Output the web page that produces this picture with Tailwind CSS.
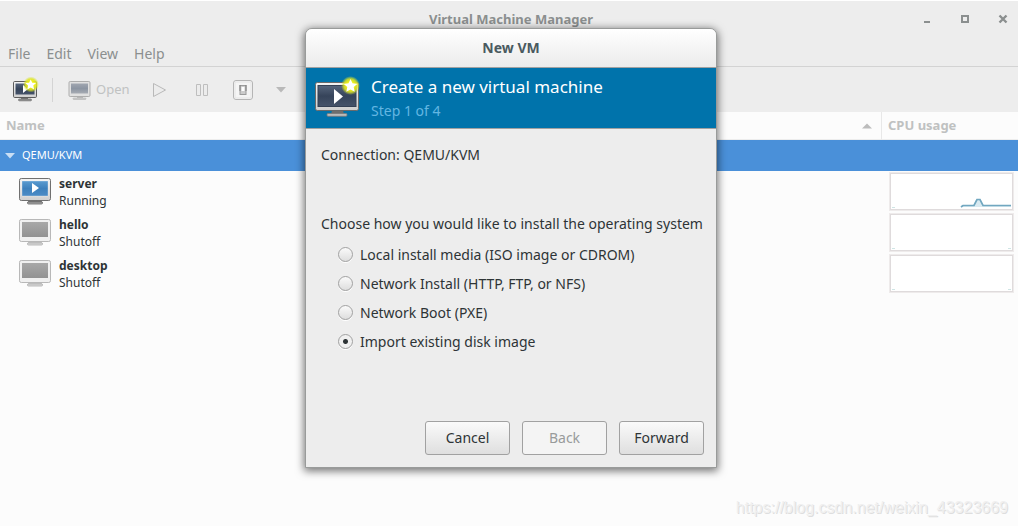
<!DOCTYPE html>
<html lang="en">
<head>
<meta charset="utf-8">
<meta name="viewport" content="width=device-width, initial-scale=1">
<title>Virtual Machine Manager</title>
<script src="https://cdn.jsdelivr.net/npm/@tailwindcss/browser@4"></script>
</head>
<body class="relative min-h-screen overflow-hidden bg-[#fcfcfc] font-['Noto_Sans','Open_Sans',sans-serif] text-sm text-[#2e3436]">

<svg class="absolute size-0" aria-hidden="true">
  <defs>
    <linearGradient id="frame" x1="0" y1="0" x2="0" y2="1"><stop offset="0" stop-color="#f4f4f4"/><stop offset="1" stop-color="#cfcfcf"/></linearGradient>
    <linearGradient id="navy" x1="0" y1="0" x2="0" y2="1"><stop offset="0" stop-color="#56657c"/><stop offset=".5" stop-color="#36445a"/><stop offset="1" stop-color="#45536a"/></linearGradient>
    <linearGradient id="blue" x1="0" y1="0" x2="0" y2="1"><stop offset="0" stop-color="#5a9bd0"/><stop offset=".5" stop-color="#3d80bc"/><stop offset="1" stop-color="#4c8cc6"/></linearGradient>
    <linearGradient id="gray" x1="0" y1="0" x2="0" y2="1"><stop offset="0" stop-color="#a8a8a8"/><stop offset="1" stop-color="#929292"/></linearGradient>
    <linearGradient id="pale" x1="0" y1="0" x2="0" y2="1"><stop offset="0" stop-color="#a0a6b0"/><stop offset=".5" stop-color="#8c95a2"/><stop offset="1" stop-color="#a6abb3"/></linearGradient>
    <radialGradient id="glow"><stop offset=".4" stop-color="#f2f218"/><stop offset=".7" stop-color="#dfe620" stop-opacity=".85"/><stop offset="1" stop-color="#d2e030" stop-opacity="0"/></radialGradient>
  </defs>
</svg>

<div class="flex min-h-screen flex-col">
  <header class="border-t border-white bg-[#ededed]">
    <div class="relative flex h-9 items-center justify-center">
      <h1 class="pl-1 text-[13px] font-bold text-[#8b8f8f]">Virtual Machine Manager</h1>
      <div class="absolute right-1.5 top-2 flex gap-5 text-[#8b8f8f]">
        <button aria-label="Minimize" class="size-[18px]"><svg viewBox="0 0 18 18" class="size-[18px]"><path d="M6 12h6v2H6z" fill="currentColor"/></svg></button>
        <button aria-label="Maximize" class="size-[18px]"><svg viewBox="0 0 18 18" class="size-[18px]"><path d="M6 7h6v6H6z" fill="none" stroke="currentColor" stroke-width="2"/></svg></button>
        <button aria-label="Close" class="size-[18px]"><svg viewBox="0 0 18 18" class="size-[18px]"><path d="M5.500 6.500l7 7m0-7l-7 7" fill="none" stroke="currentColor" stroke-width="2.400"/></svg></button>
      </div>
    </div>
    <nav class="flex h-[30px] items-end gap-4 border-b border-[#d3d3d3] px-2 pb-0.5 text-sm text-[#8b8f8f]">
      <button>File</button><button>Edit</button><button>View</button><button>Help</button>
    </nav>
    <div class="flex h-[45px] items-center text-[#c0c2c2]">
      <button aria-label="New virtual machine" class="ml-3">
        <svg viewBox="0 0 27 26" class="h-[26px] w-[27px]">
          <path d="M9 20h7v3H9z" fill="#777"/><rect x="6.500" y="22" width="13" height="1.800" rx=".9" fill="#999" stroke="#666" stroke-width=".7"/>
          <rect x="1.500" y="4.500" width="23" height="16" rx="1.200" fill="url(#frame)" stroke="#5c5c5c"/>
          <rect x="3.500" y="6.500" width="19" height="11" fill="url(#navy)"/>
          <path d="M11 8v8l5-4z" fill="#fff"/>
          <circle cx="19" cy="7.500" r="8" fill="url(#glow)"/>
          <path d="M18.700 2.500l1.600 3.200 3.800.4-2.800 2.500.8 3.800-3.400-1.900-3.400 1.900.8-3.800-2.800-2.500 3.800-.4z" fill="#fff"/>
        </svg>
      </button>
      <div class="ml-[13px] h-6 w-px bg-[#d4d4d4]"></div>
      <button class="ml-3.5 flex items-center gap-[3px]" disabled>
        <svg viewBox="0 0 26 24" class="h-6 w-[26px]"><path d="M10 17h6v4h-6z" fill="#bbb"/><rect x="6" y="20" width="13" height="1.500" rx=".7" fill="#ccc" stroke="#b0b0b0" stroke-width=".6"/><rect x="2" y="3.500" width="21" height="15" rx="1.200" fill="#e0e0e0" stroke="#adadad"/><rect x="4" y="5.500" width="17" height="10" fill="url(#pale)"/></svg>
        <span class="text-[13px]">Open</span>
      </button>
      <button aria-label="Run" class="ml-5" disabled><svg viewBox="0 0 18 18" class="size-[18px]"><path d="M3.500 2.500v13L15.500 9z" fill="#ececec" stroke="#b9b9b9" stroke-linejoin="round"/></svg></button>
      <button aria-label="Pause" class="ml-6" disabled><svg viewBox="0 0 18 18" class="size-[18px]"><path d="M4.500 3.500h4v11h-4zM11.500 3.500h4v11h-4z" fill="#ececec" stroke="#bebebe"/></svg></button>
      <button aria-label="Shut down" class="ml-[22px]" disabled><svg viewBox="0 0 22 22" class="size-[22px]"><rect x="1.500" y="1.500" width="19" height="19" rx="2.500" fill="#f5f5f5" stroke="#b5b5b5"/><rect x="3" y="3" width="16" height="16" rx="1" fill="none" stroke="#e5e5e5"/><rect x="8" y="6.500" width="6" height="9" fill="#ccc" stroke="#9c9c9c"/><path d="M9.500 8h3v4h-3z" fill="#fff"/><path d="M8 6v6M14 6v6" stroke="#808080"/></svg></button>
      <button aria-label="Shut down menu" class="ml-[22px]" disabled><svg viewBox="0 0 10 6" class="h-1.5 w-2.5"><path d="M0 0h10L5 5.500z" fill="#b9b9b9"/></svg></button>
    </div>
  </header>

  <table class="w-full table-fixed border-separate border-spacing-0 text-left text-xs">
    <colgroup><col><col class="w-[137px]"></colgroup>
    <thead>
      <tr class="h-7 text-[13px] text-[#bfc1c1]">
        <th class="border-b border-[#ededed] px-1.5 pb-0 pt-px font-bold" aria-sort="ascending"><span class="flex items-center justify-between">Name<svg viewBox="0 0 10 6" class="mr-[3px] h-1.5 w-2.5"><path d="M0 5.500h10L5 .5z" fill="#bcbcbc"/></svg></span></th>
        <th class="border-b border-l border-b-[#ededed] border-l-[#e8e8e8] px-1.5 pb-0 pt-px font-bold">CPU usage</th>
      </tr>
    </thead>
    <tbody>
      <tr class="h-[31px] bg-[#4a90d9] text-[11px] text-white"><td colspan="2" class="px-[5px] py-0"><span class="flex items-center gap-[7px]"><svg viewBox="0 0 10 6" class="h-1.5 w-2.5"><path d="M0 0h10L5 5.500z" fill="#c9def4"/></svg>QEMU/KVM</span></td></tr>
      <tr class="h-[41px]">
        <td class="p-0 pl-[18px]"><div class="flex items-center gap-2">
          <svg viewBox="0 0 33 29" class="h-[29px] w-[33px]"><path d="M11 23h12l2 3H9z" fill="#777"/><rect x="9.500" y="25" width="15" height="2" rx="1" fill="#aaa" stroke="#666" stroke-width=".8"/><rect x="1.500" y="1.500" width="31" height="22" rx="1.800" fill="url(#frame)" stroke="#707070"/><rect x="4" y="4" width="26" height="15" fill="url(#blue)" stroke="#fff" stroke-opacity=".5" stroke-width=".6"/><path d="M14 6v10l7-5z" fill="#fff"/></svg>
          <div class="leading-[17px]"><div class="font-bold">server</div><div>Running</div></div></div></td>
        <td class="py-0 pl-2 pr-1"><div class="h-[39px] border border-[#eeebeb]"><div class="h-full border border-[#dfdbdc] bg-white"><svg viewBox="0 0 121 35" preserveAspectRatio="none" class="h-full w-full"><path d="M70 33l2-1.500h10l3-6h4l3 6h28V33z" fill="#d9eaf1"/><path d="M70 33l2-1.500h11l3-6h3l3 6h28" fill="none" stroke="#71a7c0" stroke-width="1.700"/><path d="M1 33.500h3" stroke="#cfe5e5"/></svg></div></div></td>
      </tr>
      <tr class="h-[41px]">
        <td class="p-0 pl-[18px]"><div class="flex items-center gap-2">
          <svg viewBox="0 0 33 29" class="h-[29px] w-[33px]"><path d="M11 23h12l2 3H9z" fill="#c8c8c8"/><rect x="9.500" y="25" width="15" height="2" rx="1" fill="#ddd" stroke="#aaa" stroke-width=".8"/><rect x="1.500" y="1.500" width="31" height="22" rx="1.800" fill="#f0f0f0" stroke="#b8b8b8"/><rect x="4" y="4" width="26" height="15" fill="url(#gray)"/></svg>
          <div class="leading-[17px]"><div class="font-bold">hello</div><div>Shutoff</div></div></div></td>
        <td class="py-0 pl-2 pr-1"><div class="h-[39px] border border-[#eeebeb]"><div class="h-full border border-[#dfdbdc] bg-white"><svg viewBox="0 0 121 35" preserveAspectRatio="none" class="h-full w-full"><path d="M1 33.500h3M117 33.500h3" stroke="#cfe5e5"/></svg></div></div></td>
      </tr>
      <tr class="h-[41px]">
        <td class="p-0 pl-[18px]"><div class="flex items-center gap-2">
          <svg viewBox="0 0 33 29" class="h-[29px] w-[33px]"><path d="M11 23h12l2 3H9z" fill="#c8c8c8"/><rect x="9.500" y="25" width="15" height="2" rx="1" fill="#ddd" stroke="#aaa" stroke-width=".8"/><rect x="1.500" y="1.500" width="31" height="22" rx="1.800" fill="#f0f0f0" stroke="#b8b8b8"/><rect x="4" y="4" width="26" height="15" fill="url(#gray)"/></svg>
          <div class="leading-[17px]"><div class="font-bold">desktop</div><div>Shutoff</div></div></div></td>
        <td class="py-0 pl-2 pr-1"><div class="h-[39px] border border-[#eeebeb]"><div class="h-full border border-[#dfdbdc] bg-white"><svg viewBox="0 0 121 35" preserveAspectRatio="none" class="h-full w-full"><path d="M1 33.500h3M117 33.500h3" stroke="#cfe5e5"/></svg></div></div></td>
      </tr>
    </tbody>
  </table>

  <footer class="mt-auto px-2.5 pb-2 text-right font-['Liberation_Sans',sans-serif] text-base leading-5 text-[#f0f0f0] [text-shadow:1px_1px_0_#dedede]">https://blog.csdn.net/weixin_43323669</footer>
</div>

<section role="dialog" aria-labelledby="dialog-title" class="absolute left-[305px] top-7 w-[412px] overflow-hidden rounded-t-[7px] border border-[#999b9a] bg-[#ededed] shadow-[0_2px_8px_1px_rgba(0,0,0,0.55)]">
  <h2 id="dialog-title" class="flex h-[39px] items-center justify-center border-b border-[#a1a1a1] bg-linear-to-b from-white to-[#ebebeb] text-sm font-bold text-[#4a5a60]">New VM</h2>
  <div class="flex h-[61px] items-center gap-[11px] border-b border-[#a1a1a1] bg-[#0073ab] pl-2">
    <svg viewBox="0 0 46 44" class="h-11 w-[46px]" aria-hidden="true">
      <path d="M18 34h11l1 5H17z" fill="#6e6e6e"/><rect x="13" y="37.500" width="20" height="2.800" rx="1" fill="#bbb" stroke="#777" stroke-width=".8"/>
      <rect x="1.500" y="6.500" width="43" height="28" rx="1.800" fill="url(#frame)" stroke="#6a6a6a"/>
      <rect x="4" y="9.500" width="38" height="21" fill="url(#navy)" stroke="#344054"/>
      <path d="M20 13v15l9-7.500z" fill="#fff"/>
      <circle cx="36.500" cy="9.500" r="9.500" fill="url(#glow)"/>
      <path d="M36.500 3l2 4.300 4.700.6-3.500 3.200 1 4.700-4.200-2.400-4.200 2.400 1-4.700-3.500-3.200 4.700-.6z" fill="#fff"/>
    </svg>
    <div class="pt-0.5"><p class="text-[17px] leading-6 text-white">Create a new virtual machine</p><p class="text-sm leading-6 text-[#63b6e2]">Step 1 of 4</p></div>
  </div>
  <form class="px-3 pb-3 pt-4">
    <p class="pl-[3px] text-sm leading-5">Connection: QEMU/KVM</p>
    <fieldset class="mt-[49px] text-sm">
      <legend class="whitespace-nowrap pl-[3px] leading-5">Choose how you would like to install the operating system</legend>
      <div class="pl-5 pt-1.5">
        <label class="flex h-[29px] items-center gap-[7px]"><input type="radio" name="method" class="size-[15px] appearance-none rounded-full border border-[#a1a1a1] bg-linear-to-b from-[#fafafa] to-[#dedede] shadow-[0_1px_0_#fff]">Local install media (ISO image or CDROM)</label>
        <label class="flex h-[29px] items-center gap-[7px]"><input type="radio" name="method" class="size-[15px] appearance-none rounded-full border border-[#a1a1a1] bg-linear-to-b from-[#fafafa] to-[#dedede] shadow-[0_1px_0_#fff]">Network Install (HTTP, FTP, or NFS)</label>
        <label class="flex h-[29px] items-center gap-[7px]"><input type="radio" name="method" class="size-[15px] appearance-none rounded-full border border-[#a1a1a1] bg-linear-to-b from-[#fafafa] to-[#dedede] shadow-[0_1px_0_#fff]">Network Boot (PXE)</label>
        <label class="flex h-[29px] items-center gap-[7px]"><input type="radio" name="method" checked class="size-[15px] appearance-none rounded-full border border-[#a1a1a1] bg-[radial-gradient(circle,#2e3436_2px,#f0f0f0_3px)] shadow-[0_1px_0_#fff]">Import existing disk image</label>
      </div>
    </fieldset>
    <div class="mt-[65px] flex justify-end gap-3 text-sm">
      <button type="button" class="h-[34px] w-[85px] rounded-[3px] border border-[#a1a1a1] bg-linear-to-b from-[#fafafa] to-[#dfdfdf]">Cancel</button>
      <button type="button" disabled class="h-[34px] w-[85px] rounded-[3px] border border-[#a1a1a1] bg-[#f4f4f4] text-[#989b9b]">Back</button>
      <button type="button" class="h-[34px] w-[85px] rounded-[3px] border border-[#a1a1a1] bg-linear-to-b from-[#fafafa] to-[#dfdfdf]">Forward</button>
    </div>
  </form>
</section>
</body>
</html>
